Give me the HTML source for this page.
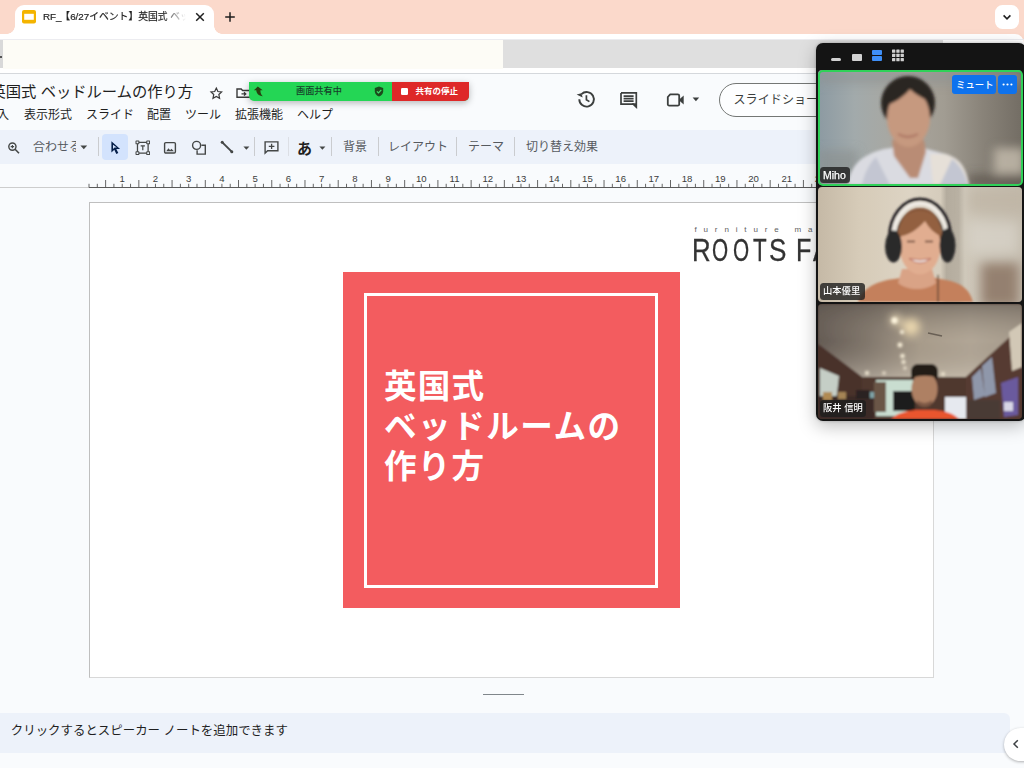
<!DOCTYPE html>
<html lang="ja">
<head>
<meta charset="utf-8">
<title>RF_【6/27イベント】英国式 ベッドルームの作り方</title>
<style>
*{box-sizing:border-box;margin:0;padding:0}
html,body{width:1024px;height:768px;overflow:hidden;background:#f9fbfd}
body{position:relative;font-family:"Liberation Sans","Noto Sans CJK JP",sans-serif;color:#1f1f1f}
.abs{position:absolute}
.t{position:absolute;white-space:nowrap;line-height:1}
/* chrome */
#tabstrip{left:0;top:0;width:1024px;height:44px;background:#fbd9cb}
#tab{left:14.5px;top:5px;width:199px;height:30px;background:#fff;border-radius:9px 9px 0 0}
#tab:before,#tab:after{content:"";position:absolute;bottom:1px;width:8px;height:8px}
#tab:before{left:-8px;background:radial-gradient(circle at 0 0,transparent 7.5px,#fff 8px)}
#tab:after{right:-8px;background:radial-gradient(circle at 100% 0,transparent 7.5px,#fff 8px)}
#whitestrip{left:0;top:34px;width:1024px;height:40px;background:#fff;border-radius:0 9px 0 0}
#line39{left:0;top:39px;width:1024px;height:1px;background:#ececf0}
#cream{left:3px;top:40px;width:500px;height:29px;background:#fdfcf6}
#lgrey{left:0;top:40px;width:3px;height:28px;background:#d9d9d9}
#greybar{left:503px;top:40px;width:440px;height:28px;background:#dfdfdf}
#line73{left:0;top:73px;width:1024px;height:1px;background:#d5d8dc}
/* docs */
#toolbar{left:-20px;top:130px;width:1060px;height:34px;background:#edf2fa;border-radius:17px}
.sep{position:absolute;width:1px;background:#cacccf;top:137px;height:19px}
.tb{position:absolute;white-space:nowrap;line-height:1;font-size:12px;color:#565a5f;top:141px}
.menu{position:absolute;white-space:nowrap;line-height:1;font-size:12px;color:#1f1f1f;top:109px}
#slide{left:89px;top:202px;width:845px;height:476px;background:#fff;border:1px solid #d8d8d8;border-top-color:#bfbfbf;border-left-color:#bfbfbf}
#red{left:343px;top:272px;width:336.5px;height:336px;background:#f35c5f}
#frame{left:364px;top:293px;width:294px;height:294.5px;border:3px solid #fff}
#stitle{left:384px;top:367px;font-size:32.6px;letter-spacing:1.2px;line-height:40px;font-weight:700;color:#fff;white-space:nowrap;position:absolute;font-family:"Liberation Sans","Noto Sans CJK JP",sans-serif}
#notes{left:-10px;top:713px;width:1020px;height:40px;background:#edf2fa;border-radius:6px}
#handle{left:483px;top:694px;width:41px;height:1px;background:#80868b}
/* zoom panel */
#panel{left:816px;top:43px;width:210px;height:378px;background:#141414;border-radius:7px 7px 7px 7px;box-shadow:0 5px 18px rgba(0,0,0,.26),0 0 3px rgba(0,0,0,.25)}
.tile{position:absolute;left:818px;width:204px;height:115px;border-radius:4px;overflow:hidden}
.lbl{position:absolute;left:820px;height:17px;background:rgba(30,30,30,.8);border-radius:3.5px;color:#fff;font-size:10px;line-height:17px;padding:0 4px;white-space:nowrap;font-weight:700}
.rl{-webkit-text-stroke:.3px #333;position:absolute;top:234.5px;font-size:30.5px;line-height:1;color:#333;transform-origin:0 0;white-space:pre}
</style>
</head>
<body>
<!-- browser chrome -->
<div class="abs" id="tabstrip"></div>
<div class="abs" id="whitestrip"></div>
<div class="abs" id="tab"></div>
<svg class="abs" style="left:22px;top:10px" width="14" height="14" viewBox="0 0 14 14"><rect x="0" y="0" width="14" height="13.5" rx="2" fill="#f4b400"/><rect x="2.2" y="3.8" width="9.6" height="6" fill="#fff"/></svg>
<div class="t" id="tabtitle" style="left:43px;top:9.6px;line-height:14px;-webkit-text-stroke:.2px #1f1f1f;font-size:9.8px;color:#1f1f1f;width:143px;overflow:hidden;-webkit-mask-image:linear-gradient(90deg,#000 120px,transparent 143px);mask-image:linear-gradient(90deg,#000 120px,transparent 143px)">RF_<span style="margin-left:-1.2px">【</span>6/27イベント】英国式 ベッドルームの作り方</div>
<svg class="abs" style="left:194px;top:11px" width="12" height="12" viewBox="0 0 12 12"><path d="M2.2 2.2l7.6 7.6M9.8 2.2l-7.6 7.6" stroke="#1f1f1f" stroke-width="1.5" fill="none"/></svg>
<svg class="abs" style="left:224px;top:11px" width="12" height="12" viewBox="0 0 12 12"><path d="M6 1.2v9.6M1.2 6h9.6" stroke="#1f1f1f" stroke-width="1.5" fill="none"/></svg>
<div class="abs" style="left:995px;top:5.2px;width:24px;height:24px;border-radius:7.5px;background:#fff"></div>
<svg class="abs" style="left:1001px;top:11px" width="12" height="12" viewBox="0 0 12 12"><path d="M2.6 4.4L6 7.8l3.4-3.4" stroke="#1f1f1f" stroke-width="1.6" fill="none"/></svg>
<div class="abs" id="line39"></div>
<div class="abs" id="cream"></div>
<div class="abs" id="lgrey"></div><div class="abs" style="left:0;top:56px;width:1.5px;height:2px;background:#555"></div>
<div class="abs" id="greybar"></div>
<div class="abs" id="line73"></div>

<!-- docs header -->
<div class="t" id="doctitle" style="left:-9.5px;top:83.5px;font-size:15.3px;color:#1f1f1f">英国式 ベッドルームの作り方</div>
<div class="menu" style="left:-3px">入</div>
<div class="menu" style="left:24px">表示形式</div>
<div class="menu" style="left:86px">スライド</div>
<div class="menu" style="left:147px">配置</div>
<div class="menu" style="left:185px">ツール</div>
<div class="menu" style="left:235px">拡張機能</div>
<div class="menu" style="left:297px">ヘルプ</div>

<div class="abs" id="toolbar"></div>
<div class="tb" style="left:33px;width:43px;overflow:hidden">合わせる</div>
<div class="tb" style="left:343px">背景</div>
<div class="tb" style="left:388px">レイアウト</div>
<div class="tb" style="left:468px">テーマ</div>
<div class="tb" style="left:526px">切り替え効果</div>
<div class="t" style="left:297px;top:140.7px;font-size:15px;font-weight:700;color:#1f1f1f">あ</div>


<!-- header icons -->
<svg class="abs" style="left:208.7px;top:85.8px" width="14.6" height="14.6" viewBox="0 0 16 16"><path d="M8 2.3l1.75 3.75 4.05.5-3 2.8.8 4.05L8 11.4l-3.6 2 .8-4.05-3-2.8 4.05-.5z" fill="none" stroke="#3a3a3a" stroke-width="1.35" stroke-linejoin="miter"/></svg>
<svg class="abs" style="left:235px;top:86px" width="18" height="14" viewBox="0 0 18 14"><path d="M2 3h4.2l1.4 1.5H16v6.8H2z" fill="none" stroke="#3a3a3a" stroke-width="1.4"/><path d="M6.5 7.9h4M9 6.2l1.8 1.7L9 9.6" fill="none" stroke="#3a3a3a" stroke-width="1.3"/></svg>
<svg class="abs" style="left:576px;top:89px" width="21" height="21" viewBox="0 0 21 21"><path d="M3.3 10.3a7.3 7.3 0 1 0 2.2-5.2" fill="none" stroke="#3c3f3e" stroke-width="1.9"/><path d="M1.6 3.6l4.6 1.9-1.7 4.2z" fill="#3c3f3e" transform="rotate(-38 4 6)"/><path d="M10.4 6.3v4.4l3 1.9" fill="none" stroke="#3c3f3e" stroke-width="1.7"/></svg>
<svg class="abs" style="left:619px;top:91px" width="20" height="18" viewBox="0 0 20 18"><path d="M2 1.9h15.3v11.3H14.6L17.3 16V13.2" fill="none" stroke="#3c3f3e" stroke-width="1.7" stroke-linejoin="miter"/><path d="M2 1.9v11.3h13" fill="none" stroke="#3c3f3e" stroke-width="1.7"/><path d="M4.6 5.1h10M4.6 7.6h10M4.6 10.1h10" stroke="#3c3f3e" stroke-width="1.6"/><path d="M13.2 13.2h4.1V17z" fill="#3c3f3e"/></svg>
<svg class="abs" style="left:666px;top:92px" width="20" height="16" viewBox="0 0 20 16"><path d="M4.2 2.4h7.6a1.4 1.4 0 0 1 1.4 1.4v8.4a1.4 1.4 0 0 1-1.4 1.4H3.2a1.4 1.4 0 0 1-1.4-1.4V5z" fill="none" stroke="#3c3f3e" stroke-width="1.8" stroke-linejoin="round"/><path d="M13.2 7.4L17.7 3.6v8.8L13.2 8.6z" fill="#3c3f3e"/></svg>
<svg class="abs" style="left:692px;top:97px" width="8" height="5" viewBox="0 0 8 5"><path d="M.6.6h6.6L3.9 4.2z" fill="#3c3f3e"/></svg>
<div class="abs" style="left:719px;top:82.5px;width:200px;height:34px;border:1px solid #747775;border-radius:17px;background:#fdfeff"></div>
<div class="t" style="left:733.5px;top:93.8px;font-size:12.1px;color:#3c3f3e">スライドショー</div>

<!-- toolbar icons -->
<div class="abs" style="left:102px;top:134px;width:26px;height:26px;border-radius:4px;background:#d3e3fd"></div>
<svg class="abs" style="left:7px;top:141px" width="14" height="14" viewBox="0 0 14 14"><circle cx="5.4" cy="5.6" r="3.6" fill="none" stroke="#444746" stroke-width="1.4"/><path d="M8.1 8.3l3.9 3.9" stroke="#444746" stroke-width="1.6"/><path d="M3.7 5.6h3.4M5.4 3.9v3.4" stroke="#444746" stroke-width="1.1"/></svg>
<svg class="abs" style="left:79.5px;top:145px" width="8" height="5" viewBox="0 0 8 5"><path d="M.4.5h6.8L3.8 4.2z" fill="#444746"/></svg>
<svg class="abs" style="left:109px;top:139px" width="14" height="17" viewBox="0 0 14 17"><path d="M2.4 2.2v11.2l2.9-2.7 2 4.3 2-.9-2-4.2h3.8z" fill="#041e49"/><path d="M4 5.8v4.2l1.6-1.5.9-.1h1.3z" fill="#d3e3fd"/></svg>
<svg class="abs" style="left:134.7px;top:139.8px" width="15.6" height="15.6" viewBox="0 0 17 17"><path d="M2.7 2.7h11.6v11.6H2.7z" fill="none" stroke="#444746" stroke-width="1.4"/><g fill="#edf2fa" stroke="#444746" stroke-width="1.1"><rect x="1.1" y="1.1" width="3.1" height="3.1" rx=".3"/><rect x="12.8" y="1.1" width="3.1" height="3.1" rx=".3"/><rect x="1.1" y="12.8" width="3.1" height="3.1" rx=".3"/><rect x="12.8" y="12.8" width="3.1" height="3.1" rx=".3"/></g><path d="M6.2 6.3h4.6M8.5 6.3v4.9" stroke="#444746" stroke-width="1.3" fill="none"/></svg>
<svg class="abs" style="left:163px;top:141px" width="14" height="14" viewBox="0 0 14 14"><rect x="1.6" y="1.6" width="10.8" height="10.4" rx="1.2" fill="none" stroke="#444746" stroke-width="1.4"/><path d="M3.2 10.3l2.300-3 1.600 1.900 1.300-1.500 2.500 2.600z" fill="#444746"/></svg>
<svg class="abs" style="left:191px;top:140px" width="17" height="16" viewBox="0 0 17 16"><circle cx="5.6" cy="5.4" r="4" fill="none" stroke="#444746" stroke-width="1.4"/><path d="M10.4 5.2h3.9v8.9H6.1v-3.9" fill="none" stroke="#444746" stroke-width="1.4"/></svg>
<svg class="abs" style="left:219px;top:139px" width="16" height="16" viewBox="0 0 16 16"><path d="M3.3 3.3l9.4 9.4" stroke="#444746" stroke-width="1.9"/><circle cx="3.2" cy="3.2" r="1.5" fill="#444746"/><circle cx="12.8" cy="12.8" r="1.5" fill="#444746"/></svg>
<svg class="abs" style="left:242.5px;top:145.5px" width="7" height="5" viewBox="0 0 7 5"><path d="M.4.5h6L3.4 3.8z" fill="#444746"/></svg>
<svg class="abs" style="left:263px;top:140px" width="17" height="15" viewBox="0 0 17 15"><path d="M2.1 1.9h12.8v8.9H4.6L2.1 13.2z" fill="none" stroke="#444746" stroke-width="1.4" stroke-linejoin="miter"/><path d="M5.8 6.3h5.6M8.6 3.7v5.2" stroke="#444746" stroke-width="1.3"/></svg>
<svg class="abs" style="left:319px;top:145.5px" width="7" height="5" viewBox="0 0 7 5"><path d="M.4.5h6L3.4 3.8z" fill="#444746"/></svg>
<div class="sep" style="left:98px"></div>
<div class="sep" style="left:254px"></div>
<div class="sep" style="left:288px;background:#dcdfe5"></div>
<div class="sep" style="left:331px"></div>
<div class="sep" style="left:378px"></div>
<div class="sep" style="left:456px"></div>
<div class="sep" style="left:514px"></div>

<!-- ruler -->
<svg class="abs" style="left:0;top:170px" width="1024" height="20" viewBox="0 170 1024 20" shape-rendering="auto"><rect x="0" y="187" width="89" height="1" fill="#cdcdcd"/><rect x="89" y="187" width="940" height="1" fill="#5a5a5a"/><path d="M89.00 183.8v3.7M97.31 183.8v3.7M113.92 183.8v3.7M122.23 183.8v3.7M130.54 183.8v3.7M147.15 183.8v3.7M155.46 183.8v3.7M163.76 183.8v3.7M180.38 183.8v3.7M188.69 183.8v3.7M196.99 183.8v3.7M213.61 183.8v3.7M221.91 183.8v3.7M230.22 183.8v3.7M246.83 183.8v3.7M255.14 183.8v3.7M263.45 183.8v3.7M280.06 183.8v3.7M288.37 183.8v3.7M296.68 183.8v3.7M313.29 183.8v3.7M321.60 183.8v3.7M329.91 183.8v3.7M346.52 183.8v3.7M354.83 183.8v3.7M363.13 183.8v3.7M379.75 183.8v3.7M388.06 183.8v3.7M396.36 183.8v3.7M412.98 183.8v3.7M421.28 183.8v3.7M429.59 183.8v3.7M446.20 183.8v3.7M454.51 183.8v3.7M462.82 183.8v3.7M479.43 183.8v3.7M487.74 183.8v3.7M496.05 183.8v3.7M512.66 183.8v3.7M520.97 183.8v3.7M529.28 183.8v3.7M545.89 183.8v3.7M554.20 183.8v3.7M562.50 183.8v3.7M579.12 183.8v3.7M587.43 183.8v3.7M595.73 183.8v3.7M612.35 183.8v3.7M620.65 183.8v3.7M628.96 183.8v3.7M645.57 183.8v3.7M653.88 183.8v3.7M662.19 183.8v3.7M678.80 183.8v3.7M687.11 183.8v3.7M695.42 183.8v3.7M712.03 183.8v3.7M720.34 183.8v3.7M728.65 183.8v3.7M745.26 183.8v3.7M753.57 183.8v3.7M761.87 183.8v3.7M778.49 183.8v3.7M786.80 183.8v3.7M795.10 183.8v3.7M811.72 183.8v3.7M820.02 183.8v3.7M828.33 183.8v3.7M844.94 183.8v3.7M853.25 183.8v3.7M861.56 183.8v3.7M878.17 183.8v3.7M886.48 183.8v3.7M894.79 183.8v3.7M911.40 183.8v3.7M919.71 183.8v3.7M928.02 183.8v3.7M944.63 183.8v3.7M952.94 183.8v3.7M961.24 183.8v3.7M977.86 183.8v3.7M986.17 183.8v3.7M994.47 183.8v3.7M1011.09 183.8v3.7M1019.39 183.8v3.7M1027.70 183.8v3.7" stroke="#555" stroke-width="0.9" fill="none"/><path d="M105.61 180v7.5M138.84 180v7.5M172.07 180v7.5M205.30 180v7.5M238.53 180v7.5M271.76 180v7.5M304.98 180v7.5M338.21 180v7.5M371.44 180v7.5M404.67 180v7.5M437.90 180v7.5M471.13 180v7.5M504.35 180v7.5M537.58 180v7.5M570.81 180v7.5M604.04 180v7.5M637.27 180v7.5M670.50 180v7.5M703.72 180v7.5M736.95 180v7.5M770.18 180v7.5M803.41 180v7.5M836.64 180v7.5M869.87 180v7.5M903.09 180v7.5M936.32 180v7.5M969.55 180v7.5M1002.78 180v7.5" stroke="#555" stroke-width="0.9" fill="none"/><g font-family="Liberation Sans, sans-serif" font-size="9.6" fill="#3c3c3c" text-anchor="middle"><text x="122.23" y="182">1</text><text x="155.46" y="182">2</text><text x="188.69" y="182">3</text><text x="221.91" y="182">4</text><text x="255.14" y="182">5</text><text x="288.37" y="182">6</text><text x="321.60" y="182">7</text><text x="354.83" y="182">8</text><text x="388.06" y="182">9</text><text x="421.28" y="182">10</text><text x="454.51" y="182">11</text><text x="487.74" y="182">12</text><text x="520.97" y="182">13</text><text x="554.20" y="182">14</text><text x="587.43" y="182">15</text><text x="620.65" y="182">16</text><text x="653.88" y="182">17</text><text x="687.11" y="182">18</text><text x="720.34" y="182">19</text><text x="753.57" y="182">20</text><text x="786.80" y="182">21</text><text x="820.02" y="182">22</text><text x="853.25" y="182">23</text><text x="886.48" y="182">24</text><text x="919.71" y="182">25</text></g></svg>

<!-- zoom share banner -->
<div class="abs" style="left:249px;top:82px;width:220px;height:19px;border-radius:0 0 5px 5px;box-shadow:0 2px 7px rgba(0,0,0,.28);overflow:hidden;background:#24d655">
  <div class="abs" style="left:143px;top:0;width:77px;height:19px;background:#de2828"></div>
</div>
<svg class="abs" style="left:253px;top:86px" width="12" height="11" viewBox="0 0 12 11"><path d="M4.8.4L.9 4.3h2.4c0 2.900 2.200 5.600 6.600 5.900-1.700-1.100-2.500-3.200-2.500-5.900h2.300z" fill="#28400f"/></svg>
<div class="t" style="left:296px;top:86.5px;font-size:9.2px;color:#17402a;font-weight:500">画面共有中</div>
<svg class="abs" style="left:373.5px;top:86px" width="10" height="11" viewBox="0 0 10 11"><path d="M5 .4l4.200 1.600v3.200c0 2.600-1.800 4.500-4.200 5.300C2.600 9.700.8 7.800.8 5.200V2z" fill="#1c4a1c"/><path d="M2.900 5.300l1.600 1.600 2.800-3" stroke="#3fe06a" stroke-width="1.200" fill="none"/></svg>
<div class="abs" style="left:401px;top:88px;width:7px;height:7px;border-radius:1.2px;background:#fff"></div>
<div class="t" style="left:415.5px;top:87px;font-size:8.5px;color:#fff;font-weight:700">共有の停止</div>

<!-- slide -->
<div class="abs" id="slide"></div>
<div class="abs" id="red"></div>
<div class="abs" id="frame"></div>
<div id="stitle">英国式<br><span style="letter-spacing:1.5px">ベッドルームの</span><br>作り方</div>


<!-- slide logo -->
<div class="t" style="left:694.5px;top:226px;font-size:8px;letter-spacing:6.85px;color:#606060">furniture ma</div>
<div id="roots"><span class="rl" style="left:692.2px;transform:scaleX(0.847)">R</span><span class="rl" style="left:712.1px;transform:scaleX(0.68)">O</span><span class="rl" style="left:732.9px;transform:scaleX(0.68)">O</span><span class="rl" style="left:753.2px;transform:scaleX(0.733)">T</span><span class="rl" style="left:768.5px;transform:scaleX(0.855)">S</span><span class="rl" style="left:790px"> </span><span class="rl" style="left:795.5px;transform:scaleX(0.825)">F</span><span class="rl" style="left:812.6px;transform:scaleX(0.81)">A</span></div>

<!-- notes -->
<div class="abs" id="handle"></div>
<div class="abs" id="notes"></div>
<div class="t" style="left:10.8px;top:725.3px;font-size:12.45px;color:#1f1f1f">クリックするとスピーカー ノートを追加できます</div>


<div class="abs" style="left:1003.5px;top:727.5px;width:40px;height:33px;border-radius:16.5px;background:#fff;box-shadow:0 1px 3px rgba(0,0,0,.3)"></div>
<svg class="abs" style="left:1010.7px;top:738px" width="10" height="12" viewBox="0 0 10 12"><path d="M6.800 2.200L3 6l3.800 3.800" stroke="#3c4043" stroke-width="1.500" fill="none"/></svg>

<!-- zoom panel -->
<div class="abs" id="panel"></div>
<!-- panel header icons -->
<div class="abs" style="left:831px;top:57.500px;width:10.2px;height:3.500px;border-radius:1.500px;background:#d2d2d2"></div>
<div class="abs" style="left:852px;top:53.500px;width:10.2px;height:7.500px;border-radius:1px;background:#d2d2d2"></div>
<div class="abs" style="left:872px;top:49.500px;width:10.2px;height:5.200px;border-radius:1px;background:#3f8ff7"></div>
<div class="abs" style="left:872px;top:56px;width:10.2px;height:5.200px;border-radius:1px;background:#3f8ff7"></div>
<svg class="abs" style="left:892px;top:49px" width="13" height="13" viewBox="0 0 13 13"><g fill="#cfcfcf"><rect x="0" y=".4" width="3.300" height="3.300" rx=".5"/><rect x="4.300" y=".4" width="3.300" height="3.300" rx=".5"/><rect x="8.600" y=".4" width="3.300" height="3.300" rx=".5"/><rect x="0" y="4.700" width="3.300" height="3.300" rx=".5"/><rect x="4.300" y="4.700" width="3.300" height="3.300" rx=".5"/><rect x="8.600" y="4.700" width="3.300" height="3.300" rx=".5"/><rect x="0" y="9" width="3.300" height="3.300" rx=".5"/><rect x="4.300" y="9" width="3.300" height="3.300" rx=".5"/><rect x="8.600" y="9" width="3.300" height="3.300" rx=".5"/></g></svg>

<!-- tile 1 -->
<div class="tile" id="tile1" style="top:70px">
<svg width="204" height="115" viewBox="0 0 204 115">
<defs>
<linearGradient id="bg1" x1="0" x2="1" y1="0" y2="0"><stop offset="0" stop-color="#8c9aa2"/><stop offset=".18" stop-color="#a2aaab"/><stop offset=".42" stop-color="#aaa79f"/><stop offset=".62" stop-color="#a19c92"/><stop offset=".8" stop-color="#8a847a"/><stop offset="1" stop-color="#736d64"/></linearGradient>
<filter id="b1" x="-20%" y="-20%" width="140%" height="140%"><feGaussianBlur stdDeviation="1.600"/></filter>
<filter id="b1b" x="-20%" y="-20%" width="140%" height="140%"><feGaussianBlur stdDeviation="5"/></filter>
</defs>
<rect width="204" height="115" fill="url(#bg1)"/>
<g filter="url(#b1b)"><rect x="0" y="0" width="204" height="14" fill="#8e9392" opacity=".6"/><rect x="176" y="78" width="30" height="26" fill="#c5bdae" opacity=".8"/><rect x="150" y="104" width="60" height="14" fill="#5b554d" opacity=".7"/><rect x="0" y="80" width="40" height="40" fill="#8a8f8e" opacity=".6"/></g>
<g filter="url(#b1)">
<path d="M30 115c2-18 12-30 36-36l28-4 30 8c18 4 24 14 27 32z" fill="#dadbe1"/><path d="M112 84l14 0c16 4 22 14 25 31h-36z" fill="#e6e0d8"/>
<path d="M74 70h32l2 12-8 26h-8l-16-22z" fill="#b98c74"/>
<ellipse cx="90" cy="33" rx="27" ry="27" fill="#2c2521"/>
<ellipse cx="90.500" cy="48" rx="21.500" ry="29" fill="#c6997f"/>
<path d="M66 36c2-16 14-24 28-23 12 1 20 8 22 20-10-4-18-8-24-14-6 8-16 14-26 17z" fill="#2c2521"/>
<path d="M44 115c2-10 6-20 14-28l14 28zM150 115c-3-12-8-20-16-26l-12 26z" fill="#c3c6d2"/>
<path d="M80 64q10 6 20 0" stroke="#a8705f" stroke-width="2" fill="none"/>
</g>
</svg>
</div>
<div class="abs" style="left:817.500px;top:69.500px;width:205px;height:116px;border:2.200px solid #2fd158;border-radius:5px"></div>
<div class="abs" style="left:952px;top:75px;width:44px;height:19px;border-radius:3px;background:#0e72ed"></div>
<div class="t" style="left:956px;top:80px;font-size:9.4px;color:#fff;font-weight:500;letter-spacing:0">ミュート</div>
<div class="abs" style="left:998px;top:75px;width:19px;height:19px;border-radius:3px;background:#0e72ed"></div>
<svg class="abs" style="left:1002px;top:83px" width="11" height="3" viewBox="0 0 11 3"><circle cx="1.600" cy="1.500" r="1.100" fill="#fff"/><circle cx="5.500" cy="1.500" r="1.100" fill="#fff"/><circle cx="9.400" cy="1.500" r="1.100" fill="#fff"/></svg>
<div class="lbl" style="top:166.5px;height:16px;line-height:16px;width:30px;font-weight:400;font-size:10.5px;padding:0 3px;-webkit-text-stroke:.25px #fff">Miho</div>

<!-- tile 2 -->
<div class="tile" id="tile2" style="top:187px">
<svg width="204" height="115" viewBox="0 0 204 115">
<defs>
<linearGradient id="bg2" x1="0" x2="1" y1="0" y2="0"><stop offset="0" stop-color="#c5b9a6"/><stop offset=".2" stop-color="#d6cbb8"/><stop offset=".45" stop-color="#ddd4c4"/><stop offset=".6" stop-color="#d5ccbc"/><stop offset=".63" stop-color="#b4ac9e"/><stop offset=".69" stop-color="#b9b1a3"/><stop offset=".72" stop-color="#cfc8ba"/><stop offset="1" stop-color="#c4bcae"/></linearGradient>
<filter id="b2" x="-20%" y="-20%" width="140%" height="140%"><feGaussianBlur stdDeviation="1.300"/></filter>
<filter id="b2b" x="-30%" y="-30%" width="160%" height="160%"><feGaussianBlur stdDeviation="6"/></filter>
</defs>
<rect width="204" height="115" fill="url(#bg2)"/>
<g filter="url(#b2b)"><rect x="163" y="76" width="38" height="44" fill="#94806f"/><rect x="150" y="0" width="60" height="26" fill="#bdb4a4" opacity=".7"/><rect x="150" y="36" width="50" height="30" fill="#d9d4ca" opacity=".7"/></g>
<g filter="url(#b2)">
<path d="M40 115c4-12 14-20 36-23l26-4 26 5c16 3 24 10 27 22z" fill="#c4805c"/>
<path d="M84 82h30l4 14c-10 8-28 8-38 0z" fill="#d9a386"/>
<path d="M71.500 50a30.500 38 0 0 1 61 0" fill="none" stroke="#262427" stroke-width="3.200"/>
<path d="M75.500 50a26.500 33.500 0 0 1 53 0" fill="none" stroke="#f0ece6" stroke-width="3.600"/>
<path d="M78.500 52a23.500 30 0 0 1 47 0" fill="none" stroke="#3a3534" stroke-width="1.400"/>
<path d="M80 62c-3-24 6-41 22-41s25 17 22 41c-2 6-6 6-6 0l-16-18-16 18c0 6-4 6-6 0z" fill="#87573a"/>
<ellipse cx="102" cy="59" rx="20.500" ry="28.500" fill="#e1ad90"/>
<path d="M80 50c1-16 9-26 22-26 13 0 21 10 22 26-8-4-13-9-17-16-8 9-16 14-27 16z" fill="#93603f"/>
<ellipse cx="75.500" cy="59.500" rx="8.500" ry="16" fill="#2b292b"/>
<ellipse cx="129.500" cy="58.500" rx="8" ry="17" fill="#2b292b"/>
<path d="M91 71.500q11 9 22 0q-11 3-22 0z" fill="#f4efe9" stroke="#b8685a" stroke-width="1"/>
<path d="M89 54.500h8M107 54.500h8" stroke="#5a3a2c" stroke-width="1.600"/>
<path d="M120 88v27" stroke="#3a2c26" stroke-width="1"/>
</g>
</svg>
</div>
<div class="lbl" style="top:283px;width:44.5px;font-size:9.3px;font-weight:500;padding:0 3px">山本優里</div>

<!-- tile 3 -->
<div class="tile" id="tile3" style="top:304px">
<svg width="204" height="115" viewBox="0 0 204 115">
<defs>
<linearGradient id="c3" x1="0" x2="1" y1="0" y2="0"><stop offset="0" stop-color="#645b54"/><stop offset=".25" stop-color="#82786d"/><stop offset=".5" stop-color="#a89c8b"/><stop offset=".75" stop-color="#b1a696"/><stop offset="1" stop-color="#a59a8b"/></linearGradient>
<linearGradient id="c3v" x1="0" x2="0" y1="0" y2="1"><stop offset="0" stop-color="#5a524b" stop-opacity=".55"/><stop offset=".5" stop-color="#8a7f73" stop-opacity="0"/><stop offset="1" stop-color="#d8cfc0" stop-opacity=".45"/></linearGradient>
<filter id="b3" x="-20%" y="-20%" width="140%" height="140%"><feGaussianBlur stdDeviation="1"/></filter>
<filter id="b3b" x="-50%" y="-50%" width="200%" height="200%"><feGaussianBlur stdDeviation="4"/></filter>
<filter id="b3c" x="-50%" y="-50%" width="200%" height="200%"><feGaussianBlur stdDeviation="1.500"/></filter>
</defs>
<rect width="204" height="115" fill="#4c342c"/>
<g filter="url(#b3)">
<path d="M0 0h204v22l-56 51H44L0 40z" fill="url(#c3)"/>
<path d="M0 0h204v22l-56 51H44L0 40z" fill="url(#c3v)"/>
<path d="M0 40l44 33v42H0z" fill="#4a322b"/>
<path d="M148 73l56-51v93h-56z" fill="#563b30"/>
<rect x="44" y="73" width="104" height="42" fill="#50372e"/>
<path d="M2 64l19 8-3 26-16-3z" fill="#c5cec6"/>
<rect x="58" y="76" width="37" height="36" fill="#c9ddd0"/>
<rect x="75" y="87" width="22" height="20" fill="#1b1b1c"/>
<rect x="127" y="93" width="21" height="22" fill="#e6e9ef"/>
<path d="M154 73l9-9 4 28-11 4zM164 62l10-9 4 36-11 4z" fill="#8f97aa"/>
<path d="M191 28l13-9v44l-10 4z" fill="#d2c8b6"/>
<path d="M183 79l17-6v38l-14 2z" fill="#6b5a9e"/>
<rect x="0" y="92" width="56" height="23" fill="#3a2a25"/><rect x="5" y="88" width="9" height="8" fill="#b08a52"/><rect x="20" y="88" width="8" height="7" fill="#a58455"/><rect x="38" y="86" width="14" height="9" fill="#2a2324"/><rect x="52" y="88" width="6" height="6" fill="#7fa4a8"/><rect x="56" y="78" width="12" height="30" fill="#6a5647"/>
<rect x="150" y="96" width="32" height="19" fill="#4a3a36"/>
<rect x="186" y="98" width="9" height="9" fill="#d8d6e6"/>
<path d="M73 115c6-6 16-8 24-9h20c10 1 18 3 24 9z" fill="#e9542e"/>
<rect x="93" y="60" width="27" height="18" rx="7" fill="#231c19"/>
<ellipse cx="106.500" cy="85" rx="13" ry="17.500" fill="#ae8064"/>
<path d="M94 74c2-8 8-12 14-12 7 0 11 4 12 12-8-3-18-3-26 0z" fill="#231c19"/>
<path d="M99 96q7.500 6 15 0l-1 6q-6.500 4-13 0z" fill="#6b4a3a" opacity=".7"/>
</g>
<g filter="url(#b3b)"><circle cx="93" cy="23" r="9" fill="#f3dfb4" opacity=".9"/><circle cx="78" cy="16" r="6" fill="#f3e2bd" opacity=".8"/></g>
<g filter="url(#b3c)" fill="#fff6df"><circle cx="76.500" cy="16.500" r="3.200"/><circle cx="84" cy="28" r="2"/><circle cx="82" cy="41" r="2.400"/><circle cx="84.500" cy="52" r="2.200"/><circle cx="85.500" cy="58" r="2"/><circle cx="49" cy="69" r="2"/><circle cx="66" cy="69" r="1.600"/><circle cx="125" cy="70" r="1.800"/><circle cx="87" cy="64" r="1.600"/></g>
<path d="M110 29l14 3" stroke="#5a5148" stroke-width="1.500" opacity=".8"/>
</svg>
</div>
<div class="lbl" style="top:400px;width:46px;font-size:9.3px;font-weight:500;padding:0 3px">阪井 信明</div>

</body>
</html>
